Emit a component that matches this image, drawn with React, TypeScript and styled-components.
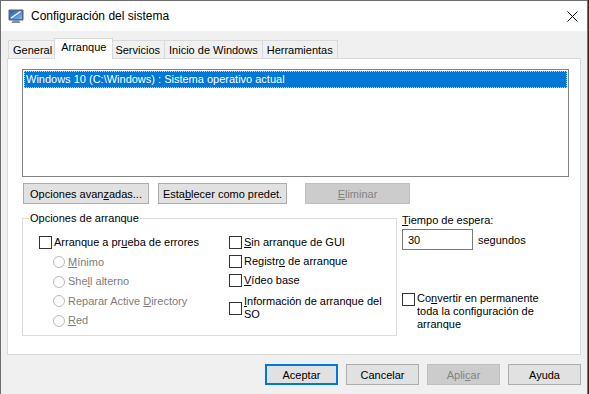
import React from "react";
import styled, { createGlobalStyle, css } from "styled-components";

const GlobalStyle = createGlobalStyle`
  html, body {
    margin: 0;
    padding: 0;
  }
  body {
    background: #3b2a1e;
    overflow: hidden;
    font-family: "Segoe UI", "Liberation Sans", Arial, sans-serif;
    font-size: 11px;
    color: #000;
  }
`;

const Window = styled.div`
    width: 588px;
    height: 400px;
    box-sizing: border-box;
    border: 1px solid #6e6e6e;
    border-bottom: none;
    background: #f0f0f0;
    display: flex;
    flex-direction: column;
`;

const TitleBar = styled.div`
    height: 30px;
    flex-shrink: 0;
    background: #fff;
    display: flex;
    align-items: center;
    padding-left: 7px;
`;

const Title = styled.span`
    margin-left: 7px;
    font-size: 12px;
    color: #000;
`;

const CloseButton = styled.div`
    margin-left: auto;
    width: 30px;
    height: 30px;
    display: flex;
    align-items: center;
    justify-content: center;
`;

const Body = styled.div`
    flex: 1;
    padding: 7px 6px 0 6px;
    display: flex;
    flex-direction: column;
`;

const TabStrip = styled.div`
    height: 20px;
    display: flex;
    align-items: flex-end;
    padding-left: 2px;
`;

const Tab = styled.div<{ $active?: boolean }>`
    height: 18px;
    box-sizing: border-box;
    padding: 0 4px;
    border: 1px solid #d9d9d9;
    border-bottom: none;
    margin-left: -1px;
    background: #f0f0f0;
    display: flex;
    align-items: center;
    white-space: nowrap;
    ${(p) =>
        p.$active &&
        css`
            height: 21px;
            margin: 0 -2px -1px -3px;
            padding: 0 6px;
            background: #fff;
            position: relative;
            z-index: 1;
            align-items: flex-start;
            padding-top: 2px;
        `}
`;

const Panel = styled.div`
    height: 297px;
    box-sizing: border-box;
    border: 1px solid #d9d9d9;
    background: #fff;
    padding: 10px 11px 0 14px;
`;

const ListBox = styled.div`
    height: 108px;
    box-sizing: border-box;
    border: 1px solid #828282;
    padding: 1px;
`;

const ListItem = styled.div<{ $selected?: boolean }>`
    height: 17px;
    line-height: 17px;
    padding-left: 2px;
    white-space: nowrap;
    ${(p) =>
        p.$selected &&
        css`
            background: #0078d7;
            color: #fff;
            outline: 1px dotted rgba(255, 255, 255, 0.7);
            outline-offset: -1px;
        `}
`;

const ButtonRow = styled.div`
    margin-top: 6px;
    padding-left: 1px;
    display: flex;
    gap: 9px;
`;

const Button = styled.div<{ $w: number; $default?: boolean; $disabled?: boolean; $ml?: number }>`
    width: ${(p) => p.$w}px;
    height: 21px;
    box-sizing: border-box;
    margin-left: ${(p) => p.$ml || 0}px;
    border: 1px solid #adadad;
    background: #e1e1e1;
    display: flex;
    align-items: center;
    justify-content: center;
    white-space: nowrap;
    ${(p) =>
        p.$default &&
        css`
            border: 2px solid #0078d7;
        `}
    ${(p) =>
        p.$disabled &&
        css`
            border-color: #bfbfbf;
            background: #cccccc;
            color: #838383;
        `}
`;

const Lower = styled.div`
    margin-top: 8px;
    display: flex;
    gap: 5px;
`;

const Group = styled.fieldset`
    margin: 0;
    padding: 0;
    width: 375px;
    height: 124px;
    box-sizing: border-box;
    border: 1px solid #dcdcdc;
    min-inline-size: 0;
`;

const Legend = styled.legend`
    margin-left: 6px;
    padding: 0 1px;
    line-height: 13px;
`;

const GroupGrid = styled.div`
    padding: 8px 0 0 16px;
    display: grid;
    grid-template-columns: 190px 1fr;
`;

const Column = styled.div`
    display: flex;
    flex-direction: column;
`;

const OptionRow = styled.div<{ $h?: number; $indent?: number; $top?: boolean; $disabled?: boolean; $mt?: number }>`
    min-height: ${(p) => p.$h || 19}px;
    margin-top: ${(p) => p.$mt || 0}px;
    padding-left: ${(p) => p.$indent || 0}px;
    display: flex;
    align-items: ${(p) => (p.$top ? "flex-start" : "center")};
    color: ${(p) => (p.$disabled ? "#7d7d7d" : "#000")};
    line-height: 13px;
    white-space: nowrap;
`;

const CheckBox = styled.span<{ $nudge?: number }>`
    width: 13px;
    height: 13px;
    box-sizing: border-box;
    border: 1px solid #333;
    background: #fff;
    flex-shrink: 0;
    margin-right: 2px;
    margin-top: ${(p) => p.$nudge || 0}px;
`;

const Radio = styled.span`
    width: 12px;
    height: 12px;
    box-sizing: border-box;
    border: 1px solid #bcbcbc;
    border-radius: 50%;
    background: #fcfcfc;
    flex-shrink: 0;
    margin-right: 3px;
`;

const Side = styled.div`
    padding-top: 2px;
    display: flex;
    flex-direction: column;
`;

const Label = styled.div`
    line-height: 13px;
`;

const TimeRow = styled.div`
    margin-top: 2px;
    display: flex;
    align-items: center;
    gap: 5px;
`;

const TextInput = styled.div`
    width: 71px;
    height: 21px;
    box-sizing: border-box;
    border: 1px solid #7a7a7a;
    background: #fff;
    padding-left: 5px;
    display: flex;
    align-items: center;
`;

const Footer = styled.div`
    margin-top: 9px;
    display: flex;
    justify-content: flex-end;
    gap: 8px;
`;

const AppIcon = () => (
    <svg width="16" height="16" viewBox="0 0 16 16">
        <defs>
            <linearGradient id="scr" x1="0" y1="0" x2="1" y2="1">
                <stop offset="0" stopColor="#1f5fc8" />
                <stop offset="1" stopColor="#7fb6f2" />
            </linearGradient>
        </defs>
        <path d="M5 12.5h6l1.5 2.5h-9z" fill="#8c86a6" />
        <rect x="0.5" y="1.5" width="15" height="11" rx="1" fill="#5b6678" />
        <rect x="2" y="3" width="12" height="8" fill="url(#scr)" />
        <path d="M3 10 C6 8 9 6 12.5 3.5" stroke="#fff" strokeWidth="1.2" fill="none" />
    </svg>
);

const CloseIcon = () => (
    <svg width="11" height="11" viewBox="0 0 11 11">
        <path d="M0.5 0.5L10.5 10.5M10.5 0.5L0.5 10.5" stroke="#000" strokeWidth="1" />
    </svg>
);

export default function App() {
    return (
        <>
            <GlobalStyle />
            <Window>
                <TitleBar>
                    <AppIcon />
                    <Title>Configuración del sistema</Title>
                    <CloseButton>
                        <CloseIcon />
                    </CloseButton>
                </TitleBar>
                <Body>
                    <TabStrip>
                        <Tab>General</Tab>
                        <Tab $active>Arranque</Tab>
                        <Tab>Servicios</Tab>
                        <Tab>Inicio de Windows</Tab>
                        <Tab>Herramientas</Tab>
                    </TabStrip>
                    <Panel>
                        <ListBox>
                            <ListItem $selected>Windows 10 (C:\Windows) : Sistema operativo actual</ListItem>
                        </ListBox>
                        <ButtonRow>
                            <Button $w={126}>
                                Opciones avan<u>z</u>adas...
                            </Button>
                            <Button $w={129}>
                                Esta<u>b</u>lecer como predet.
                            </Button>
                            <Button $w={105} $ml={9} $disabled>
                                <u>E</u>liminar
                            </Button>
                        </ButtonRow>
                        <Lower>
                            <Group>
                                <Legend>Opciones de arranque</Legend>
                                <GroupGrid>
                                    <Column>
                                        <OptionRow $h={19.5}>
                                            <CheckBox />
                                            <span>
                                                Arranque a pr<u>u</u>eba de errores
                                            </span>
                                        </OptionRow>
                                        <OptionRow $h={19.5} $indent={14} $disabled>
                                            <Radio />
                                            <span>
                                                <u>M</u>ínimo
                                            </span>
                                        </OptionRow>
                                        <OptionRow $h={19.5} $indent={14} $disabled>
                                            <Radio />
                                            <span>
                                                She<u>l</u>l alterno
                                            </span>
                                        </OptionRow>
                                        <OptionRow $h={19.5} $indent={14} $disabled>
                                            <Radio />
                                            <span>
                                                Reparar Active <u>D</u>irectory
                                            </span>
                                        </OptionRow>
                                        <OptionRow $h={19.5} $indent={14} $disabled>
                                            <Radio />
                                            <span>
                                                <u>R</u>ed
                                            </span>
                                        </OptionRow>
                                    </Column>
                                    <Column>
                                        <OptionRow>
                                            <CheckBox />
                                            <span>
                                                <u>S</u>in arranque de GUI
                                            </span>
                                        </OptionRow>
                                        <OptionRow>
                                            <CheckBox />
                                            <span>
                                                Registr<u>o</u> de arranque
                                            </span>
                                        </OptionRow>
                                        <OptionRow>
                                            <CheckBox />
                                            <span>
                                                <u>V</u>ídeo base
                                            </span>
                                        </OptionRow>
                                        <OptionRow $h={26} $mt={5}>
                                            <CheckBox />
                                            <span>
                                                <u>I</u>nformación de arranque del
                                                <br />
                                                SO
                                            </span>
                                        </OptionRow>
                                    </Column>
                                </GroupGrid>
                            </Group>
                            <Side>
                                <Label>
                                    <u>T</u>iempo de espera:
                                </Label>
                                <TimeRow>
                                    <TextInput>30</TextInput>
                                    <span>segundos</span>
                                </TimeRow>
                                <OptionRow $top $mt={42}>
                                    <CheckBox $nudge={0.5} />
                                    <span>
                                        Co<u>n</u>vertir en permanente
                                        <br />
                                        toda la configuración de
                                        <br />
                                        arranque
                                    </span>
                                </OptionRow>
                            </Side>
                        </Lower>
                    </Panel>
                    <Footer>
                        <Button $w={73} $default>
                            Aceptar
                        </Button>
                        <Button $w={73}>Cancelar</Button>
                        <Button $w={73} $disabled>
                            Apli<u>c</u>ar
                        </Button>
                        <Button $w={73}>Ayuda</Button>
                    </Footer>
                </Body>
            </Window>
        </>
    );
}
